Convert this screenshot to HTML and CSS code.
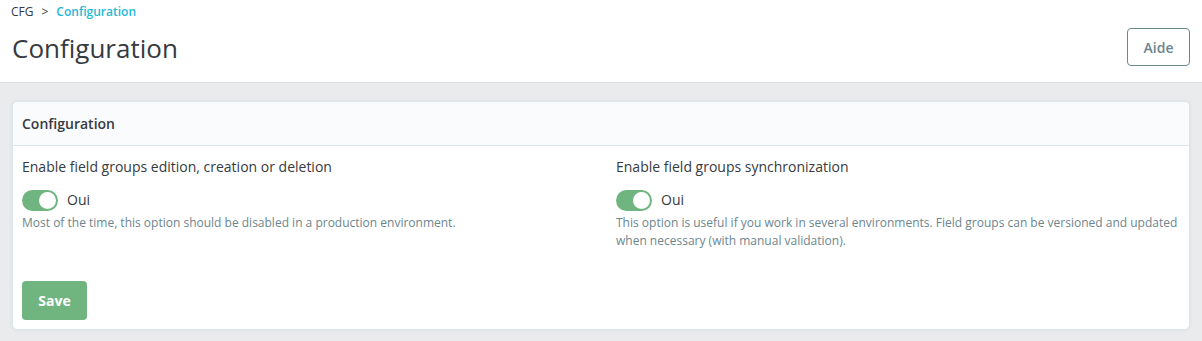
FILE: index.html
```html
<!DOCTYPE html>
<html lang="fr">
<head>
  <meta charset="UTF-8" />
  <meta name="viewport" content="width=device-width, initial-scale=1.0"/>
  <title>Configuration</title>
  <link rel="stylesheet" href="styles.css">
</head>
<body>
  <header class="page-head">
    <div class="head-left">
      <nav class="breadcrumb">
        <span>CFG</span>
        <span class="sep">&gt;</span>
        <a href="#" class="current">Configuration</a>
      </nav>
      <h1 class="page-title">Configuration</h1>
    </div>
    <button class="btn-outline">Aide</button>
  </header>

  <main class="content">
    <section class="card">
      <div class="card-header">Configuration</div>
      <div class="card-body">
        <div class="form-row">
          <div class="form-group">
            <label class="form-label">Enable field groups edition, creation or deletion</label>
            <div class="switch-line">
              <span class="switch on"><span class="knob"></span></span>
              <span class="switch-text">Oui</span>
            </div>
            <p class="help">Most of the time, this option should be disabled in a production environment.</p>
          </div>
          <div class="form-group">
            <label class="form-label">Enable field groups synchronization</label>
            <div class="switch-line">
              <span class="switch on"><span class="knob"></span></span>
              <span class="switch-text">Oui</span>
            </div>
            <p class="help">This option is useful if you work in several environments. Field groups can be versioned and updated when necessary (with manual validation).</p>
          </div>
        </div>
        <button class="btn-save">Save</button>
      </div>
    </section>
  </main>
</body>
</html>
```

FILE: styles.css
```css
:root {
  --text: #363a41;
  --muted: #6c868e;
  --link: #25b9d7;
  --green: #70b580;
  --border: #dbe6e9;
  --page-bg: #eaebed;
}

* {
  box-sizing: border-box;
}

body {
  margin: 0;
  font-family: 'Open Sans', 'Noto Sans', sans-serif;
  background: var(--page-bg);
  color: var(--text);
  font-size: 14px;
}

.page-head {
  background: #fff;
  border-bottom: 1px solid #dcdfe2;
  height: 83px;
  padding: 4px 12px 16px 11px;
  display: flex;
  justify-content: space-between;
  align-items: flex-end;
}

.breadcrumb {
  font-size: 12px;
  line-height: 16px;
  height: 16px;
  display: flex;
  gap: 8px;
}

.breadcrumb .current {
  color: var(--link);
  font-weight: 600;
  text-decoration: none;
}

.page-title {
  margin: 10px 0 0;
  font-size: 26px;
  font-weight: 400;
  line-height: 36px;
  height: 36px;
  padding-left: 1px;
}

.btn-outline {
  width: 63px;
  height: 38px;
  background: #fff;
  border: 1px solid var(--muted);
  border-radius: 4px;
  color: var(--muted);
  font-family: inherit;
  font-size: 14px;
  font-weight: 600;
}

.content {
  padding: 18px 12px 11px;
}

.card {
  background: #fff;
  border: 1px solid var(--border);
  border-radius: 5px;
  box-shadow: 0 0 4px 0 rgba(0, 0, 0, 0.06);
}

.card-header {
  height: 44px;
  padding: 0 9px;
  display: flex;
  align-items: center;
  background: #fafbfc;
  border-bottom: 1px solid var(--border);
  border-radius: 5px 5px 0 0;
  font-weight: 600;
}

.card-body {
  padding: 11px 9px 9px;
}

.form-row {
  display: grid;
  grid-template-columns: 1fr 1fr;
  column-gap: 30px;
}

.form-label {
  display: block;
  line-height: 20px;
}

.switch-line {
  margin-top: 12px;
  height: 22px;
  display: flex;
  align-items: center;
  gap: 9px;
}

.switch {
  width: 36px;
  height: 21px;
  border-radius: 11px;
  background: var(--green);
  display: flex;
  align-items: center;
  justify-content: flex-end;
  padding: 0 2px;
}

.switch .knob {
  width: 17px;
  height: 17px;
  border-radius: 50%;
  background: #fff;
}

.switch-text {
  line-height: 20px;
}

.help {
  margin: 3px 0 0;
  font-size: 12px;
  line-height: 18px;
  color: var(--muted);
}

.btn-save {
  margin-top: 31px;
  width: 65px;
  height: 39px;
  background: var(--green);
  border: none;
  border-radius: 4px;
  color: #fff;
  font-family: inherit;
  font-size: 14px;
  font-weight: 700;
}
```
